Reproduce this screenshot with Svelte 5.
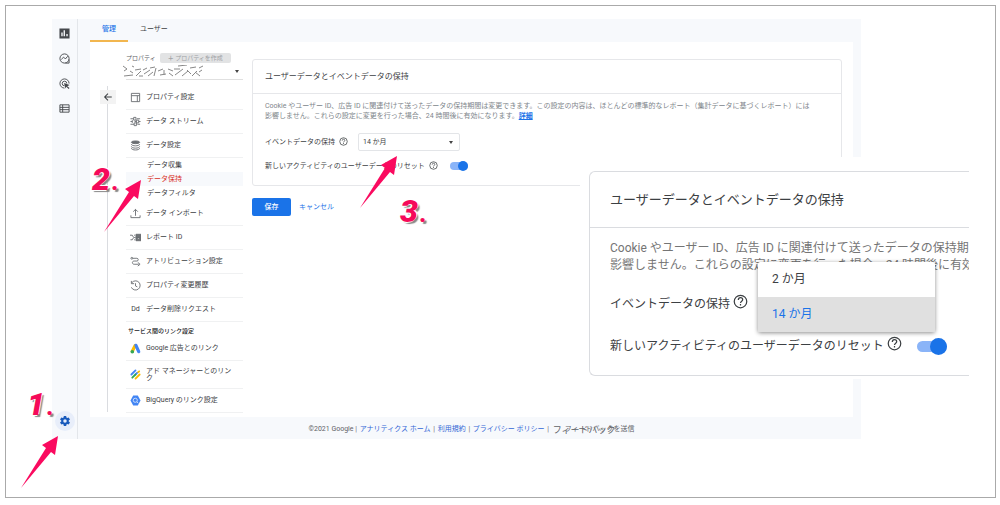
<script>
  const rail = ['chart', 'trend', 'target', 'table']

  const propertyItems = [
    { icon: 'window', label: 'プロパティ設定' },
    { icon: 'streams', label: 'データ ストリーム' },
    {
      icon: 'database',
      label: 'データ設定',
      children: ['データ収集', 'データ保持', 'データフィルタ']
    },
    { icon: 'upload', label: 'データ インポート' },
    { icon: 'reportId', label: 'レポート ID' },
    { icon: 'path', label: 'アトリビューション設定' },
    { icon: 'history', label: 'プロパティ変更履歴' },
    { icon: 'dd', label: 'データ削除リクエスト' }
  ]

  const linkItems = [
    { icon: 'ads', label: 'Google 広告とのリンク' },
    { icon: 'adManager', label: 'アド マネージャーとのリンク', tall: true },
    { icon: 'bigQuery', label: 'BigQuery のリンク設定' }
  ]

  const notes = [
    { id: 1, x: 27, y: 388, arrowX: 21, arrowY: 436 },
    { id: 2, x: 92, y: 163, arrowX: 104, arrowY: 180 },
    { id: 3, x: 400, y: 195, arrowX: 360, arrowY: 156 }
  ]

  const periods = ['2 か月', '14 か月']

  let activeChild = 'データ保持'
  let period = '14 か月'
  let resetOnActivity = true
</script>

{#snippet icon(name)}
  <svg class="icon" viewBox="0 0 24 24" aria-hidden="true">
    {#if name === 'chart'}
      <path fill="currentColor" stroke="none" fill-rule="evenodd" d="M1 1h22v22H1zM5 10v8h3v-8zM10 5v13h3V5zM16 13v5h3v-5z" />
    {:else if name === 'trend'}
      <circle cx="12" cy="12" r="10" />
      <path d="M5 14l5-5 4 4 5-6M14 22h8v-8" />
    {:else if name === 'target'}
      <path d="M22 12A10 10 0 1 0 12 22M17 12a5 5 0 1 0-5 5" />
      <path fill="currentColor" stroke="none" d="M11 11l12 4-5 3 5 4-2 2-5-5-2 4z" />
    {:else if name === 'table'}
      <path d="M2 4h20v16H2zM2 9.500h20M2 14.500h20M8 4v16" />
    {:else if name === 'gear'}
      <path
        fill="currentColor"
        stroke="none"
        fill-rule="evenodd"
        d="M19.430 12.980a7.800 7.800 0 0 0 0-1.960l2.110-1.650a.5.5 0 0 0 .12-.64l-2-3.460a.5.5 0 0 0-.61-.22l-2.490 1a7.300 7.300 0 0 0-1.690-.98l-.38-2.650A.5.5 0 0 0 14 2h-4a.5.5 0 0 0-.49.420l-.38 2.650c-.61.250-1.170.590-1.690.980l-2.490-1a.5.5 0 0 0-.61.220l-2 3.460a.5.5 0 0 0 .12.640l2.110 1.650a7.800 7.800 0 0 0 0 1.960l-2.110 1.650a.5.5 0 0 0-.12.640l2 3.460c.12.220.39.300.61.220l2.490-1c.52.400 1.080.730 1.690.980l.38 2.650c.03.240.24.420.49.420h4c.25 0 .46-.18.49-.42l.38-2.650c.61-.25 1.170-.59 1.690-.98l2.490 1c.23.090.49 0 .61-.22l2-3.460a.5.5 0 0 0-.12-.64zM12 15.500a3.500 3.500 0 1 1 0-7 3.500 3.500 0 0 1 0 7z"
      />
    {:else if name === 'back'}
      <path stroke-width="2.500" d="M21 12H4M12 4l-8 8 8 8" />
    {:else if name === 'window'}
      <path d="M3 3h18v18H3zM3 8h18M16 8v13" />
    {:else if name === 'streams'}
      <path d="M1 6h7M15 6h7M1 12h4M10 12h4M19 12h4M1 18h8M16 18h6M8 3h5v6H8zM14 9h5v6h-5zM9 15h5v6H9zM5 9v6" />
    {:else if name === 'database'}
      <ellipse cx="12" cy="5" rx="9" ry="3" fill="currentColor" />
      <path d="M3 9c0 5 18 5 18 0M3 14c0 5 18 5 18 0M3 18c0 5 18 5 18 0" />
    {:else if name === 'upload'}
      <path d="M12 17V3M7 8l5-5 5 5M2 16v5h20v-5" />
    {:else if name === 'reportId'}
      <path d="M0 7h5l3 5-3 5H1M11 7h-2M9 12h3M9 17h2" />
      <path fill="currentColor" fill-rule="evenodd" d="M13 5h11v14H13zM17 8v2h3V8zM16 13v3h5v-3z" />
    {:else if name === 'path'}
      <circle cx="4" cy="5" r="2" />
      <path d="M6 5h9c4 0 4 6 0 6H9c-5 0-5 7 0 7h10M17 14l5 4-5 4" />
    {:else if name === 'history'}
      <path d="M4 6a10 10 0 1 1-1 10M3 2v6h6M12 7v6l4 2" />
    {:else if name === 'ads'}
      <path stroke="#fbbc04" stroke-width="7" stroke-linecap="round" d="M11 6L5 18" />
      <path stroke="#4285f4" stroke-width="7" stroke-linecap="round" d="M13 5l6 14" />
      <circle cx="5" cy="19" r="4" fill="#34a853" stroke="none" />
    {:else if name === 'adManager'}
      <path stroke="#4285f4" stroke-width="4" stroke-linecap="round" d="M3 12l9-9M12 12l4-4" />
      <path stroke="#34a853" stroke-width="4" stroke-linecap="round" d="M5 19l7-7" />
      <path stroke="#fbbc04" stroke-width="4" stroke-linecap="round" d="M12 21l9-9M18 7l2-2" />
    {:else if name === 'bigQuery'}
      <path fill="#4285f4" stroke="none" d="M7 1h10l6 11-6 11H7L1 12z" />
      <circle cx="11.500" cy="11.500" r="4.500" stroke="#d2e3fc" />
      <path stroke="#d2e3fc" d="M15 15l3 3" />
    {:else if name === 'help'}
      <circle cx="12" cy="12" r="10" />
      <path d="M8.500 9.500c0-5 7-4.500 7-.5 0 2.500-3.500 2.800-3.500 5.500M12 16v2.500" />
    {/if}
  </svg>
{/snippet}

{#snippet navItem(item)}
  <a class="nav-item" class:tall={item.tall} href="#{item.icon}">
    {#if item.icon === 'dd'}
      <span class="nav-letters">Dd</span>
    {:else}
      {@render icon(item.icon)}
    {/if}
    <span>{item.label}</span>
  </a>
{/snippet}

{#snippet description()}
  <p class="description">
    Cookie やユーザー ID、広告 ID に関連付けて送ったデータの保持期間は変更できます。この設定の内容は、ほとんどの標準的なレポート（集計データに基づくレポート）には<br />
    影響しません。これらの設定に変更を行った場合、24 時間後に有効になります。<a href="#details">詳細</a>
  </p>
{/snippet}

{#snippet resetRow(id)}
  <div class="setting">
    <label for={id}>新しいアクティビティのユーザーデータのリセット</label>
    {@render icon('help')}
    <input {id} class="switch" type="checkbox" bind:checked={resetOnActivity} />
  </div>
{/snippet}

<div class="frame">
  <div class="analytics">
    <nav class="rail" aria-label="Analytics">
      {#each rail as name}
        <a href="#{name}" aria-label={name}>{@render icon(name)}</a>
      {/each}
      <a class="admin" href="#admin" aria-label="管理">{@render icon('gear')}</a>
    </nav>

    <div class="body">
      <nav class="tabs">
        <a class="selected" href="#admin">管理</a>
        <a href="#user">ユーザー</a>
      </nav>

      <div class="panel">
        <div class="collapse">
          <button class="back" aria-label="戻る">{@render icon('back')}</button>
        </div>

        <aside class="property">
          <div class="property-head">
            <span>プロパティ</span>
            <button class="create"><b>＋</b> プロパティを作成</button>
          </div>
          <button class="property-name" aria-label="プロパティを選択">
            <!-- name is scribbled out -->
            <svg class="scribble" viewBox="0 0 82 14" aria-hidden="true">
              <path d="M1 1l4 3-3 2M2 11l9-1M8 6l3 2M10 1l2 1M13 5l6-1M14 11l5-5M17 11h4M21 5l4-2M22 9l6-4M26 11l5-4M28 3l5-1M34 3l-2 8M36 6l5-2M38 10l6-1M42 5v5M46 4l5 2M47 8l4 3M52 4h6M53 10l8-6M56 1l9-1M60 11l6-5M65 5l4 4M68 3l6-1M70 11l5-5M73 7l5 4M77 3l4-2M77 7l3-2" />
            </svg>
            <span class="caret"></span>
          </button>

          {#each propertyItems as item}
            {@render navItem(item)}
            {#if item.children}
              <div class="children">
                {#each item.children as child}
                  <button class:active={child === activeChild} on:click={() => (activeChild = child)}>{child}</button>
                {/each}
              </div>
            {/if}
          {/each}

          <h2>サービス間のリンク設定</h2>
          {#each linkItems as item}
            {@render navItem(item)}
          {/each}
        </aside>

        <main>
          <section class="card">
            <h1>ユーザーデータとイベントデータの保持</h1>
            <div class="card-body">
              {@render description()}
              <div class="setting period">
                <label for="period">イベントデータの保持</label>
                {@render icon('help')}
                <div class="select">
                  <select id="period" bind:value={period}>
                    {#each periods as option}
                      <option>{option}</option>
                    {/each}
                  </select>
                  <span class="caret"></span>
                </div>
              </div>
              {@render resetRow('reset')}
            </div>
          </section>
          <div class="actions">
            <button class="save">保存</button>
            <a href="#cancel">キャンセル</a>
          </div>
        </main>
      </div>

      <footer>
        ©2021 Google | <a href="#home">アナリティクス ホーム</a> | <a href="#terms">利用規約</a> |
        <a href="#privacy">プライバシー ポリシー</a> |
        <span class="feedback">フィードバックを送信<span class="ghost">フィードバック</span></span>
      </footer>
    </div>
  </div>

  <!-- enlarged view of the settings card -->
  <div class="closeup">
    <section class="card large">
      <h1>ユーザーデータとイベントデータの保持</h1>
      <div class="card-body">
        {@render description()}
        <div class="setting period">
          <span>イベントデータの保持</span>
          {@render icon('help')}
          <div class="menu">
            {#each periods as option}
              <button class:chosen={option === period} on:click={() => (period = option)}>{option}</button>
            {/each}
          </div>
        </div>
        {@render resetRow('reset-large')}
      </div>
    </section>
  </div>

  {#each notes as note}
    <svg class="arrow" viewBox="0 0 37 52" style="left: {note.arrowX}px; top: {note.arrowY}px" aria-hidden="true">
      <path d="M37 0L21 9l4 3L0 52l30-36 4 3z" />
    </svg>
    <span class="note" style="left: {note.x}px; top: {note.y}px">{note.id}<small>.</small></span>
  {/each}
</div>

<style>
  :global(body) {
    margin: 0;
    background: #fff;
  }

  .frame {
    position: relative;
    box-sizing: border-box;
    min-height: 493px;
    margin: 5px 4px 7px 5px;
    padding: 13px 134px 57px 46px;
    border: 1px solid #aaa;
    font-family: Roboto, 'Noto Sans CJK JP', sans-serif;
    font-size: 7px;
    line-height: 10px;
    color: #3c4043;
  }

  button,
  select {
    padding: 0;
    border: 0;
    background: none;
    font: inherit;
    color: inherit;
    text-align: left;
    cursor: pointer;
  }

  a {
    color: inherit;
    text-decoration: none;
  }

  .icon {
    width: 10px;
    height: 10px;
    flex: none;
    fill: none;
    stroke: currentColor;
    stroke-width: 2;
  }

  .caret {
    border: 2px solid transparent;
    border-top: 3px solid #444;
    border-bottom: 0;
  }

  /* ── Analytics window ── */
  .analytics {
    display: flex;
    background: #f7f9fc;
  }

  .rail {
    display: flex;
    flex-direction: column;
    align-items: center;
    gap: 12px;
    width: 25px;
    padding: 8px 0;
    border-right: 1px solid #e3e6ea;
    color: #45484c;
  }

  .rail a {
    display: flex;
    padding: 1px;
  }

  .rail .icon {
    width: 11px;
    height: 11px;
  }

  .rail .admin {
    margin-top: auto;
    padding: 4px;
    border-radius: 50%;
    background: #e8eefa;
    color: #185abc;
  }

  .rail .admin .icon {
    width: 12px;
    height: 12px;
  }

  .body {
    flex: 1;
    min-width: 0;
    padding: 0 8px 0 12px;
  }

  .tabs {
    display: flex;
    height: 23px;
  }

  .tabs a {
    box-sizing: border-box;
    padding: 5px 12px 0;
  }

  .tabs .selected {
    border-bottom: 2px solid #f2b64f;
    color: #1a73e8;
    font-weight: 500;
  }

  .panel {
    display: flex;
    min-height: 365px;
    padding: 10px 11px 0 10px;
    background: #fff;
  }

  /* ── Property column ── */
  .collapse {
    width: 16px;
    margin: 34px 10px 5px 0;
    background: linear-gradient(#dadce0, #dadce0) 7px 0 / 1px 100% no-repeat;
  }

  .back {
    display: flex;
    justify-content: center;
    width: 16px;
    margin-top: 4px;
    padding: 2px 0;
    background: #f3f3f3;
  }

  .property {
    width: 117px;
    margin-right: 9px;
  }

  .property-head {
    display: flex;
    align-items: center;
    gap: 4px;
    height: 12px;
    font-size: 6px;
    color: #5f6368;
    white-space: nowrap;
  }

  .create {
    padding: 0 8px;
    border-radius: 2px;
    background: #e2e3e4;
    color: #a0a2a4;
  }

  .property-name {
    display: flex;
    align-items: center;
    justify-content: space-between;
    width: 100%;
    height: 16px;
    margin-bottom: 6px;
    padding-right: 4px;
    border-bottom: 1px solid #e0e0e0;
  }

  .scribble {
    width: 82px;
    height: 14px;
    margin-left: -4px;
    fill: none;
    stroke: #888;
  }

  .nav-item {
    display: flex;
    align-items: center;
    gap: 5px;
    box-sizing: border-box;
    min-height: 24px;
    padding-left: 4px;
    padding-right: 8px;
    border-bottom: 1px solid #f0f1f2;
    line-height: 7px;
  }

  .nav-item .icon {
    width: 11px;
    height: 11px;
    stroke-width: 2;
    color: #6b6f73;
  }

  .nav-item.tall {
    min-height: 28px;
  }

  .nav-letters {
    width: 11px;
    text-align: center;
  }

  .children {
    padding-bottom: 2px;
  }

  .children button {
    display: block;
    width: 100%;
    padding-left: 21px;
    line-height: 14px;
  }

  .children .active {
    background: #f7f9fc;
    color: #d93025;
  }

  h2 {
    margin: 2px 0 0 2px;
    font-size: 6px;
    font-weight: 500;
    line-height: 13px;
    color: #202124;
  }

  /* ── Settings card ── */
  main {
    flex: 1;
    min-width: 0;
    padding-top: 7px;
  }

  .card {
    border: 1px solid #e6e7ea;
    border-radius: 3px;
    background: #fff;
  }

  .card h1 {
    margin: 0;
    padding: 0 12px;
    border-bottom: 1px solid #e6e7ea;
    font-size: 8px;
    font-weight: 400;
    line-height: 33px;
  }

  .card-body {
    padding: 7px 12px 8px;
  }

  .description {
    margin: 0 0 8px;
    color: #80868b;
    white-space: nowrap;
  }

  .description a {
    color: #1a73e8;
    font-weight: 700;
    text-decoration: underline;
  }

  .setting {
    display: flex;
    align-items: center;
    gap: 4px;
    height: 22px;
    white-space: nowrap;
  }

  .setting.period {
    height: 26px;
  }

  .setting .icon {
    width: 9px;
    height: 9px;
    margin-bottom: 2px;
  }

  .select {
    display: flex;
    align-items: center;
    box-sizing: border-box;
    width: 102px;
    height: 18px;
    margin-left: 6px;
    padding: 0 6px 0 4px;
    border: 1px solid #e3e5e8;
    border-radius: 2px;
  }

  .select select {
    flex: 1;
    appearance: none;
    outline: none;
  }

  .switch {
    appearance: none;
    display: flex;
    align-items: center;
    width: 18px;
    height: 8px;
    margin: 0 0 0 8px;
    border-radius: 5px;
    background: #dadce0;
  }

  .switch::before {
    content: '';
    width: 10px;
    height: 10px;
    flex: none;
    border-radius: 50%;
    background: #80868b;
  }

  .switch:checked {
    justify-content: flex-end;
    background: #8ab4f8;
  }

  .switch:checked::before {
    background: #1a73e8;
  }

  .actions {
    display: flex;
    align-items: center;
    gap: 8px;
    margin-top: 12px;
    color: #1a73e8;
  }

  .save {
    width: 39px;
    border-radius: 2px;
    background: #1a73e8;
    color: #fff;
    font-weight: 500;
    line-height: 18px;
    text-align: center;
  }

  footer {
    padding: 7px 0 5px;
    text-align: center;
    color: #5f6368;
  }

  footer a {
    margin: 0 1px;
    color: #3367d6;
  }

  .feedback {
    position: relative;
    margin-left: 14px;
  }

  .ghost {
    position: absolute;
    left: -12px;
    top: 0;
    font-size: 9px;
    white-space: nowrap;
  }

  /* ── Close-up ── */
  .closeup {
    position: absolute;
    top: 151px;
    right: 26px;
    box-sizing: border-box;
    width: 389px;
    padding: 14px 0 3px 9px;
    background: #fff;
  }

  .large {
    border-right: 0;
    border-radius: 6px 0 0 6px;
    border-color: #dadce0;
    font-size: 12px;
    line-height: 17px;
    overflow: hidden;
  }

  .large h1 {
    padding: 0 20px;
    border-color: #dadce0;
    font-size: 13px;
    line-height: 55px;
  }

  .large .card-body {
    padding: 12px 20px 9px;
  }

  .large .description {
    color: #757575;
  }

  .large .setting {
    position: relative;
    gap: 3px;
    height: 40px;
  }

  .large .setting.period {
    height: 44px;
  }

  .large .icon {
    width: 15px;
    height: 15px;
    margin-bottom: 5px;
  }

  .large .switch {
    width: 30px;
    height: 11px;
    margin-left: 12px;
    border-radius: 6px;
  }

  .large .switch::before {
    width: 17px;
    height: 17px;
  }

  .menu {
    position: absolute;
    left: 148px;
    top: -20px;
    width: 177px;
    border-radius: 2px;
    background: #fff;
    box-shadow: 0 1px 4px rgba(0, 0, 0, 0.45);
  }

  .menu button {
    display: block;
    width: 100%;
    padding-left: 14px;
    line-height: 35px;
  }

  .menu .chosen {
    background: #e0e0e0;
    color: #1a73e8;
  }

  /* ── Step notes ── */
  .arrow {
    position: absolute;
    width: 37px;
    height: 52px;
    margin: -6px 0 0 -6px;
    fill: #fa0a5f;
  }

  .note {
    position: absolute;
    display: flex;
    align-items: baseline;
    gap: 2px;
    margin: -6px 0 0 -6px;
    color: #f50a5a;
    font-size: 32px;
    font-style: italic;
    font-weight: 900;
    line-height: 32px;
    text-shadow: -1px -1px #fff, 1px -1px #fff, -1px 1px #fff, 2px 2px 1px #888;
  }

  .note small {
    font-size: 24px;
  }
</style>
